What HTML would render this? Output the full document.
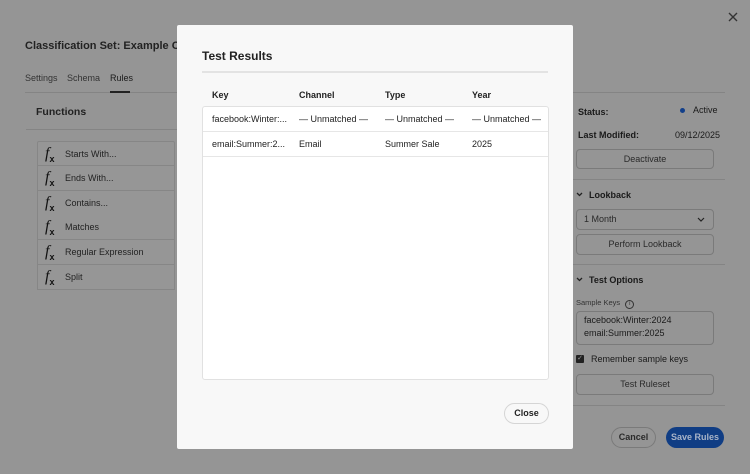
<!DOCTYPE html>
<html><head><style>
*{box-sizing:border-box;margin:0;padding:0}
body{width:750px;height:474px;background:#959595;font-family:"Liberation Sans",sans-serif;color:#1a1a1a;position:relative;overflow:hidden;font-size:9px}
.a{position:absolute;white-space:nowrap}
.b{font-weight:bold}
.line{position:absolute;height:1px;background:#848484}
.btn{position:absolute;border:1px solid #7a7a7a;border-radius:4px;text-align:center;color:#2a2a2a;font-size:9px}
.fx{position:absolute;left:37px;width:138px;height:25px;border:1px solid #868686;border-top:none;background:#969696}
.fx i{position:absolute;left:7px;top:3px;font-family:"Liberation Serif",serif;font-size:16px;font-style:italic;color:#111}
.fx i sub{font-size:9px;font-style:normal;font-family:"Liberation Sans",sans-serif;font-weight:bold}
.fx span{position:absolute;left:27px;top:7px;font-size:9px;color:#222}
#modal{position:absolute;left:177px;top:25px;width:396px;height:424px;background:#f8f8f8;border-radius:2px}
.cell{position:absolute;font-size:9px;color:#222}
.chev{position:absolute}
</style></head><body>
<svg class="a" style="left:728px;top:12px" width="10" height="10" viewBox="0 0 10 10"><path d="M1 1L9 9M9 1L1 9" stroke="#333" stroke-width="1.4"/></svg>
<div class="a b" style="left:25px;top:40px;font-size:11px;color:#222">Classification Set: Example Classific</div>
<div class="a" style="left:25px;top:73px;color:#333">Settings</div>
<div class="a" style="left:67px;top:73px;color:#333">Schema</div>
<div class="a" style="left:110px;top:73px;color:#1a1a1a">Rules</div>
<div class="line" style="left:25px;top:92px;width:160px"></div>
<div class="a" style="left:110px;top:91px;width:20px;height:2px;background:#222"></div>
<div class="a b" style="left:36px;top:106px;font-size:10.5px;color:#222">Functions</div>
<div class="line" style="left:26px;top:129px;width:160px"></div>
<div class="fx" style="top:141px;border-top:1px solid #868686;border-radius:2px 2px 0 0"><i>f<sub>x</sub></i><span>Starts With...</span></div>
<div class="fx" style="top:166px"><i>f<sub>x</sub></i><span>Ends With...</span></div>
<div class="fx" style="top:191px"><i>f<sub>x</sub></i><span>Contains...</span></div>
<div class="fx" style="top:215px"><i>f<sub>x</sub></i><span>Matches</span></div>
<div class="fx" style="top:240px"><i>f<sub>x</sub></i><span>Regular Expression</span></div>
<div class="fx" style="top:265px"><i>f<sub>x</sub></i><span>Split</span></div>

<div class="line" style="left:573px;top:92px;width:152px"></div>
<div class="a b" style="left:578px;top:107px;font-size:9px">Status:</div>
<div class="a" style="left:680px;top:108px;width:5px;height:5px;border-radius:50%;background:#123f8a"></div>
<div class="a" style="left:693px;top:105px;font-size:9px">Active</div>
<div class="a b" style="left:578px;top:130px;font-size:9px">Last Modified:</div>
<div class="a" style="left:675px;top:130px;font-size:9px">09/12/2025</div>
<div class="btn" style="left:576px;top:149px;width:138px;height:20px;line-height:18px">Deactivate</div>
<div class="line" style="left:573px;top:179px;width:152px"></div>
<svg class="chev" style="left:576px;top:192px" width="7" height="5" viewBox="0 0 7 5"><path d="M1 1L3.5 3.5L6 1" stroke="#222" stroke-width="1.3" fill="none"/></svg>
<div class="a b" style="left:589px;top:190px;font-size:9px">Lookback</div>
<div class="btn" style="left:576px;top:209px;width:138px;height:21px;line-height:19px;text-align:left;padding-left:7px">1 Month<svg style="position:absolute;right:8px;top:7px" width="8" height="5" viewBox="0 0 8 5"><path d="M1 1L4 4L7 1" stroke="#222" stroke-width="1.2" fill="none"/></svg></div>
<div class="btn" style="left:576px;top:234px;width:138px;height:21px;line-height:19px">Perform Lookback</div>
<div class="line" style="left:573px;top:264px;width:152px"></div>
<svg class="chev" style="left:576px;top:277px" width="7" height="5" viewBox="0 0 7 5"><path d="M1 1L3.5 3.5L6 1" stroke="#222" stroke-width="1.3" fill="none"/></svg>
<div class="a b" style="left:589px;top:275px;font-size:9px">Test Options</div>
<div class="a" style="left:576px;top:298px;font-size:7.5px;color:#333">Sample Keys <span style="display:inline-block;width:9px;height:9px;border:1px solid #333;border-radius:50%;font-size:6px;text-align:center;line-height:7px;margin-left:3px">i</span></div>
<div class="btn" style="left:576px;top:311px;width:138px;height:34px;text-align:left;padding:2px 7px;line-height:13px;font-size:9px;color:#1a1a1a">facebook:Winter:2024<br>email:Summer:2025</div>
<div class="a" style="left:576px;top:355px;width:8px;height:8px;background:#222;border-radius:1px;color:#999;font-size:7px;line-height:8px;text-align:center">✓</div>
<div class="a" style="left:591px;top:354px;font-size:9px">Remember sample keys</div>
<div class="btn" style="left:576px;top:374px;width:138px;height:21px;line-height:19px">Test Ruleset</div>
<div class="line" style="left:573px;top:405px;width:152px"></div>
<div class="btn" style="left:611px;top:427px;width:45px;height:21px;line-height:19px;border-radius:11px;font-weight:bold">Cancel</div>
<div class="a b" style="left:666px;top:427px;width:58px;height:21px;line-height:21px;border-radius:11px;background:#103d84;color:#a9b4c8;text-align:center;font-size:9px">Save Rules</div>

<div id="modal">
<div class="a b" style="left:25px;top:24px;font-size:12px;color:#222">Test Results</div>
<div class="a" style="left:25px;top:46px;width:346px;height:2px;background:#e3e3e3"></div>
<div class="cell b" style="left:35px;top:65px">Key</div>
<div class="cell b" style="left:122px;top:65px">Channel</div>
<div class="cell b" style="left:208px;top:65px">Type</div>
<div class="cell b" style="left:295px;top:65px">Year</div>
<div class="a" style="left:25px;top:81px;width:347px;height:274px;background:#fff;border:1px solid #e1e1e1;border-radius:3px"></div>
<div class="a" style="left:26px;top:106px;width:345px;height:1px;background:#e6e6e6"></div>
<div class="a" style="left:26px;top:131px;width:345px;height:1px;background:#e6e6e6"></div>
<div class="cell" style="left:35px;top:89px">facebook:Winter:...</div>
<div class="cell" style="left:122px;top:89px">— Unmatched —</div>
<div class="cell" style="left:208px;top:89px">— Unmatched —</div>
<div class="cell" style="left:295px;top:89px">— Unmatched —</div>
<div class="cell" style="left:35px;top:114px">email:Summer:2...</div>
<div class="cell" style="left:122px;top:114px">Email</div>
<div class="cell" style="left:208px;top:114px">Summer Sale</div>
<div class="cell" style="left:295px;top:114px">2025</div>
<div class="a b" style="left:327px;top:378px;width:45px;height:21px;line-height:19px;border:1px solid #d5d5d5;border-radius:11px;text-align:center;font-size:9px;color:#222">Close</div>
</div>
</body></html>
